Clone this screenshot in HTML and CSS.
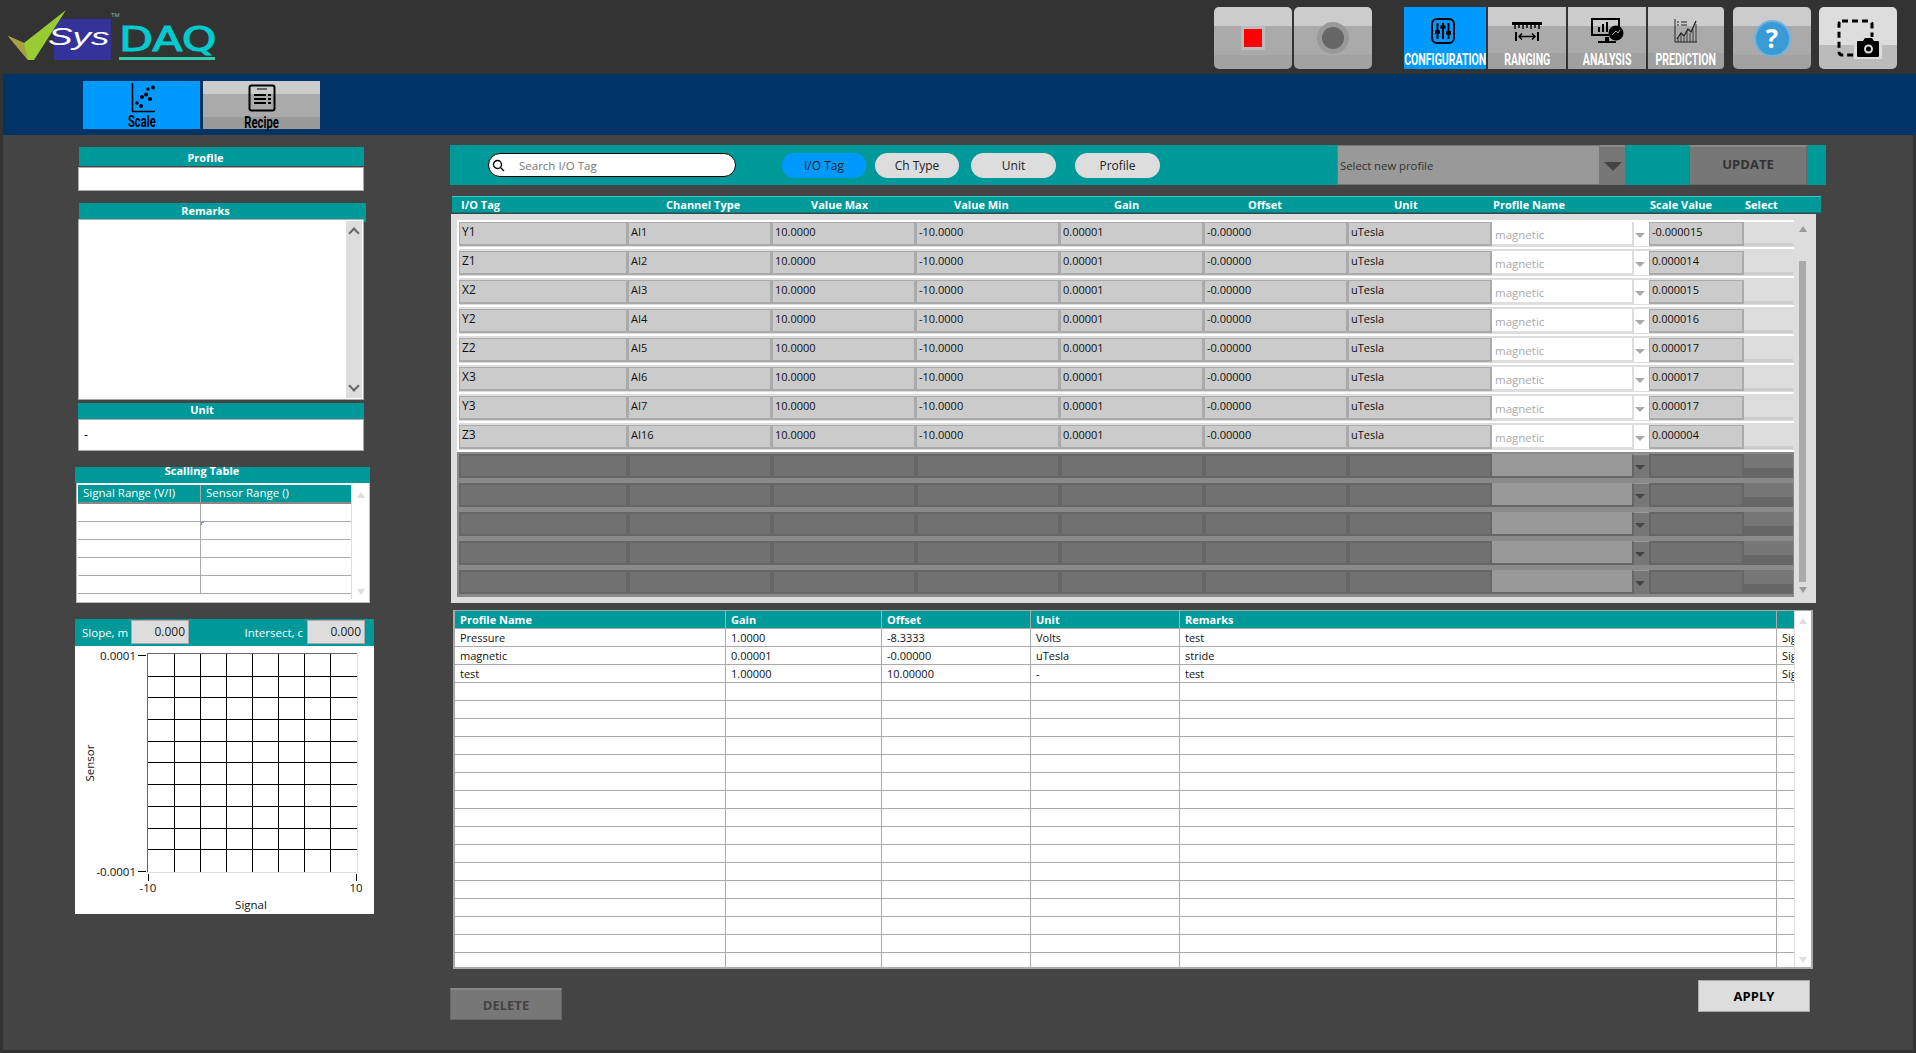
FILE: index.html
```html
<!DOCTYPE html>
<html lang="en">
<head>
<meta charset="utf-8">
<title>SysDAQ</title>
<link rel="stylesheet" href="styles.css">
</head>
<body>
<div class="page">
  <header class="topbar">
    <div class="logo">
      <svg class="logo-art" width="120" height="66" viewBox="0 0 120 66">
        <rect x="54" y="19" width="57" height="41" fill="#333399"/>
        <polygon points="8,36 24,43 66,10 34,60 28,60" fill="#99cc33"/>
        <polygon points="8,36 24,43 28,60" fill="#a8a040"/>
      </svg>
      <span class="logo-sys">Sys</span>
      <span class="logo-tm">TM</span>
      <div class="logo-daq"><span class="logo-daq-text">DAQ</span></div>
    </div>
    <div class="top-actions">
      <div class="tbtn tbtn-rec">
        <svg width="30" height="30" viewBox="0 0 30 30"><rect x="3" y="3" width="24" height="24" fill="#bbb"/><rect x="6" y="6" width="18" height="18" fill="#f00"/></svg>
      </div>
      <div class="tbtn tbtn-rec tbtn-next">
        <svg width="34" height="34" viewBox="0 0 34 34"><circle cx="17" cy="17" r="16" fill="#999"/><circle cx="17" cy="17" r="11" fill="#666"/></svg>
      </div>
      <div class="nav-group">
        <div class="nav nav-on">
          <svg class="nav-on-icon" width="26" height="26" viewBox="0 0 26 26" fill="none" stroke="#000" stroke-width="2"><rect x="2" y="1" width="22" height="24" rx="5"/><path d="M7.5 5v16M13 5v16M18.500 5v16"/><path d="M5 14h5M10.500 9h5M16 15h5" stroke-width="3.500"/></svg>
          <span class="nav-label">CONFIGURATION</span>
        </div>
        <div class="nav">
          <svg width="32" height="26" viewBox="0 0 32 26" fill="none" stroke="#000"><path d="M1 5.500h30" stroke-width="3"/><path d="M4 7v4M8 7v3M12 7v4M16 7v3M20 7v4M24 7v3M28 7v4" stroke-width="1.500"/><path d="M5 14v9M27 14v9" stroke-width="2"/><path d="M8 18.500h16" stroke-width="1.500"/><path d="M11 15.500l-3 3 3 3M21 15.500l3 3-3 3" stroke-width="1.500"/></svg>
          <span class="nav-label">RANGING</span>
        </div>
        <div class="nav">
          <svg width="34" height="26" viewBox="0 0 34 26"><path d="M2 1h27v16H2z" fill="none" stroke="#000" stroke-width="2"/><path d="M8 14V9h2v5zM12 14V6h2v8zM16 14V4h2v10z" fill="#000"/><path d="M8 23h18v2H8zM15 19h4v4h-4z" fill="#000"/><circle cx="26" cy="15" r="7.500" fill="#000"/><path d="M22 17l4-4 2 2 2-3" stroke="#aaa" fill="none"/></svg>
          <span class="nav-label">ANALYSIS</span>
        </div>
        <div class="nav">
          <svg width="26" height="26" viewBox="0 0 26 26" fill="none" stroke="#222"><path d="M2 1v23h22" stroke-width="1"/><path d="M4 4h2M8 4h6M4 7h2M8 7h6" stroke-width="1.200"/><path d="M4 21l4-6 3 3 4-7 3 3 5-11" stroke-width="1.300"/><path d="M5 20v4M8 16v8M11 19v5M14 13v11M17 15v9M20 11v13M23 6v18" stroke-width=".8"/></svg>
          <span class="nav-label">PREDICTION</span>
        </div>
      </div>
      <div class="tbtn tbtn-help"><span class="help-mark">?</span></div>
      <div class="tbtn tbtn-cam">
        <svg width="48" height="42" viewBox="0 0 48 42"><rect x="5" y="4" width="33" height="34" rx="3" fill="none" stroke="#000" stroke-width="3" stroke-dasharray="6 4"/><rect x="20" y="20" width="28" height="22" fill="#ddd"/><path d="M24 24h5l2-3h7l2 3h4a1 1 0 0 1 1 1v14a1 1 0 0 1-1 1H24a1 1 0 0 1-1-1V25a1 1 0 0 1 1-1z" fill="#000"/><circle cx="34.500" cy="32" r="4.500" fill="#ddd"/><circle cx="34.500" cy="32" r="2.500" fill="#000"/></svg>
      </div>
    </div>
  </header>

  <nav class="band">
    <div class="tab tab-on">
      <svg width="26" height="30" viewBox="0 0 26 30"><path d="M3.500 0v28.500H26" fill="none" stroke="#000" stroke-width="1.500"/><g fill="#000"><circle cx="8" cy="20" r="1.700"/><circle cx="13" cy="14" r="2"/><circle cx="12" cy="23" r="2"/><circle cx="17" cy="11.500" r="2"/><circle cx="21" cy="16" r="2"/><circle cx="19" cy="6" r="1.700"/><circle cx="24" cy="4.500" r="2"/></g></svg>
      <span class="tab-label">Scale</span>
    </div>
    <div class="tab">
      <svg width="28" height="28" viewBox="0 0 28 28"><rect x="1.500" y="1.500" width="25" height="25" rx="2" fill="none" stroke="#000" stroke-width="2"/><path d="M9 5h10" stroke="#000"/><path d="M6 11h12M6 15h12M6 19h12" stroke="#000" stroke-width="2"/><path d="M20 11h3M20 15h3M20 19h3" stroke="#000" stroke-width="2" stroke-dasharray="2 0"/></svg>
      <span class="tab-label tab-label-low">Recipe</span>
    </div>
  </nav>

  <main class="main">
    <section class="left">
      <div class="lhead lhead-profile">Profile</div>
      <div class="lfield lfield-profile"></div>

      <div class="lhead lhead-remarks">Remarks</div>
      <div class="remarks">
        <div class="rscroll"><span class="chev chev-up"></span><span class="chev chev-down"></span></div>
      </div>

      <div class="lhead lhead-unit">Unit</div>
      <div class="lfield lfield-unit">-</div>

      <div class="lhead lhead-scaling">Scalling Table</div>
      <div class="scaling">
        <div class="stable">
          <div class="srow srow-head"><div>Signal Range (V/I)</div><div>Sensor Range ()</div></div>
          <div class="srow"><div></div><div></div></div>
          <div class="srow"><div></div><div class="s-mark"></div></div>
          <div class="srow"><div></div><div></div></div>
          <div class="srow"><div></div><div></div></div>
          <div class="srow"><div></div><div></div></div>
        </div>
        <div class="sscroll"><span class="tri tri-up"></span><span class="tri tri-down"></span></div>
      </div>

      <div class="graph">
        <div class="graph-head">
          <span class="g-label g-slope">Slope, m</span><span class="g-value">0.000</span>
          <span class="g-label g-int">Intersect, c</span><span class="g-value">0.000</span>
        </div>
        <svg class="plot" width="299" height="268" viewBox="0 0 299 268">
          <rect x="0" y="0" width="299" height="268" fill="#fff"/>
          <g stroke="#000" stroke-width="1" shape-rendering="crispEdges">
            <path d="M99 7V226M125 7V226M151 7V226M177 7V226M203 7V226M229 7V226M255 7V226"/>
            <path d="M72 30H282M72 51H282M72 73H282M72 95H282M72 116H282M72 138H282M72 160H282M72 182H282M72 203H282"/>
            <path d="M63 9H71M63 225H71M73 228V235M281 228V235"/>
          </g>
          <path d="M72.500 226V7.500H282" fill="none" stroke="#666" stroke-width="1" shape-rendering="crispEdges"/>
          <path d="M72 226.500H282V7" fill="none" stroke="#ddd" stroke-width="1" shape-rendering="crispEdges"/>
          <g class="plot-text">
            <text x="61" y="14" text-anchor="end">0.0001</text>
            <text x="61" y="230" text-anchor="end">-0.0001</text>
            <text x="73" y="246" text-anchor="middle">-10</text>
            <text x="281" y="246" text-anchor="middle">10</text>
            <text x="176" y="263" text-anchor="middle">Signal</text>
            <text x="19" y="117" text-anchor="middle" transform="rotate(-90 19 117)">Sensor</text>
          </g>
        </svg>
      </div>
    </section>

    <section class="right">
      <div class="toolbar">
        <div class="search">
          <svg width="13" height="13" viewBox="0 0 13 13" fill="none" stroke="#000" stroke-width="1.300"><circle cx="5.500" cy="5.500" r="4"/><path d="M8.500 8.500l3.500 3.500"/></svg>
          <span>Search I/O Tag</span>
        </div>
        <div class="pill pill-on">I/O Tag</div>
        <div class="pill pill-ch">Ch Type</div>
        <div class="pill pill-unit">Unit</div>
        <div class="pill pill-profile">Profile</div>
        <div class="newprofile">Select new profile</div>
        <div class="newarrow"><span class="tri-dark"></span></div>
        <div class="update">UPDATE</div>
      </div>

      <div class="thead">
        <span class="th th1">I/O Tag</span><span class="th th2">Channel Type</span><span class="th th3">Value Max</span><span class="th th4">Value Min</span><span class="th th5">Gain</span><span class="th th6">Offset</span><span class="th th7">Unit</span><span class="th th8">Profile Name</span><span class="th th9">Scale Value</span><span class="th">Select</span>
      </div>

      <div class="panel">
        <div class="rows">
          <div class="row"><div class="c c1">Y1</div><div class="c">AI1</div><div class="c">10.0000</div><div class="c">-10.0000</div><div class="c">0.00001</div><div class="c">-0.00000</div><div class="c">uTesla</div><div class="combo">magnetic</div><div class="carrow"><span class="tri-light"></span></div><div class="c c9">-0.000015</div><div class="sel"></div></div>
          <div class="row"><div class="c c1">Z1</div><div class="c">AI2</div><div class="c">10.0000</div><div class="c">-10.0000</div><div class="c">0.00001</div><div class="c">-0.00000</div><div class="c">uTesla</div><div class="combo">magnetic</div><div class="carrow"><span class="tri-light"></span></div><div class="c c9">0.000014</div><div class="sel"></div></div>
          <div class="row"><div class="c c1">X2</div><div class="c">AI3</div><div class="c">10.0000</div><div class="c">-10.0000</div><div class="c">0.00001</div><div class="c">-0.00000</div><div class="c">uTesla</div><div class="combo">magnetic</div><div class="carrow"><span class="tri-light"></span></div><div class="c c9">0.000015</div><div class="sel"></div></div>
          <div class="row"><div class="c c1">Y2</div><div class="c">AI4</div><div class="c">10.0000</div><div class="c">-10.0000</div><div class="c">0.00001</div><div class="c">-0.00000</div><div class="c">uTesla</div><div class="combo">magnetic</div><div class="carrow"><span class="tri-light"></span></div><div class="c c9">0.000016</div><div class="sel"></div></div>
          <div class="row"><div class="c c1">Z2</div><div class="c">AI5</div><div class="c">10.0000</div><div class="c">-10.0000</div><div class="c">0.00001</div><div class="c">-0.00000</div><div class="c">uTesla</div><div class="combo">magnetic</div><div class="carrow"><span class="tri-light"></span></div><div class="c c9">0.000017</div><div class="sel"></div></div>
          <div class="row"><div class="c c1">X3</div><div class="c">AI6</div><div class="c">10.0000</div><div class="c">-10.0000</div><div class="c">0.00001</div><div class="c">-0.00000</div><div class="c">uTesla</div><div class="combo">magnetic</div><div class="carrow"><span class="tri-light"></span></div><div class="c c9">0.000017</div><div class="sel"></div></div>
          <div class="row"><div class="c c1">Y3</div><div class="c">AI7</div><div class="c">10.0000</div><div class="c">-10.0000</div><div class="c">0.00001</div><div class="c">-0.00000</div><div class="c">uTesla</div><div class="combo">magnetic</div><div class="carrow"><span class="tri-light"></span></div><div class="c c9">0.000017</div><div class="sel"></div></div>
          <div class="row"><div class="c c1">Z3</div><div class="c">AI16</div><div class="c">10.0000</div><div class="c">-10.0000</div><div class="c">0.00001</div><div class="c">-0.00000</div><div class="c">uTesla</div><div class="combo">magnetic</div><div class="carrow"><span class="tri-light"></span></div><div class="c c9">0.000004</div><div class="sel"></div></div>
          <div class="row off"><div class="c c1"></div><div class="c"></div><div class="c"></div><div class="c"></div><div class="c"></div><div class="c"></div><div class="c"></div><div class="combo"></div><div class="carrow"><span class="tri-dark-sm"></span></div><div class="c c9"></div><div class="sel"></div></div>
          <div class="row off"><div class="c c1"></div><div class="c"></div><div class="c"></div><div class="c"></div><div class="c"></div><div class="c"></div><div class="c"></div><div class="combo"></div><div class="carrow"><span class="tri-dark-sm"></span></div><div class="c c9"></div><div class="sel"></div></div>
          <div class="row off"><div class="c c1"></div><div class="c"></div><div class="c"></div><div class="c"></div><div class="c"></div><div class="c"></div><div class="c"></div><div class="combo"></div><div class="carrow"><span class="tri-dark-sm"></span></div><div class="c c9"></div><div class="sel"></div></div>
          <div class="row off"><div class="c c1"></div><div class="c"></div><div class="c"></div><div class="c"></div><div class="c"></div><div class="c"></div><div class="c"></div><div class="combo"></div><div class="carrow"><span class="tri-dark-sm"></span></div><div class="c c9"></div><div class="sel"></div></div>
          <div class="row off"><div class="c c1"></div><div class="c"></div><div class="c"></div><div class="c"></div><div class="c"></div><div class="c"></div><div class="c"></div><div class="combo"></div><div class="carrow"><span class="tri-dark-sm"></span></div><div class="c c9"></div><div class="sel"></div></div>
        </div>
        <div class="pscroll">
          <span class="tri tri-up tri-mid"></span>
          <span class="thumb"></span>
          <span class="tri tri-down tri-mid"></span>
        </div>
      </div>

      <div class="ptable">
        <div class="pgrid">
          <div class="prow phead"><div>Profile Name</div><div>Gain</div><div>Offset</div><div>Unit</div><div>Remarks</div><div></div></div>
          <div class="prow"><div>Pressure</div><div>1.0000</div><div>-8.3333</div><div>Volts</div><div>test</div><div>Sig</div></div>
          <div class="prow"><div>magnetic</div><div>0.00001</div><div>-0.00000</div><div>uTesla</div><div>stride</div><div>Sig</div></div>
          <div class="prow"><div>test</div><div>1.00000</div><div>10.00000</div><div>-</div><div>test</div><div>Sig</div></div>
          <div class="prow"><div></div><div></div><div></div><div></div><div></div><div></div></div>
          <div class="prow"><div></div><div></div><div></div><div></div><div></div><div></div></div>
          <div class="prow"><div></div><div></div><div></div><div></div><div></div><div></div></div>
          <div class="prow"><div></div><div></div><div></div><div></div><div></div><div></div></div>
          <div class="prow"><div></div><div></div><div></div><div></div><div></div><div></div></div>
          <div class="prow"><div></div><div></div><div></div><div></div><div></div><div></div></div>
          <div class="prow"><div></div><div></div><div></div><div></div><div></div><div></div></div>
          <div class="prow"><div></div><div></div><div></div><div></div><div></div><div></div></div>
          <div class="prow"><div></div><div></div><div></div><div></div><div></div><div></div></div>
          <div class="prow"><div></div><div></div><div></div><div></div><div></div><div></div></div>
          <div class="prow"><div></div><div></div><div></div><div></div><div></div><div></div></div>
          <div class="prow"><div></div><div></div><div></div><div></div><div></div><div></div></div>
          <div class="prow"><div></div><div></div><div></div><div></div><div></div><div></div></div>
          <div class="prow"><div></div><div></div><div></div><div></div><div></div><div></div></div>
          <div class="prow"><div></div><div></div><div></div><div></div><div></div><div></div></div>
          <div class="prow prow-last"><div></div><div></div><div></div><div></div><div></div><div></div></div>
        </div>
        <div class="ptscroll"><span class="tri tri-up"></span><span class="tri tri-down"></span></div>
      </div>

      <div class="footer">
        <div class="btn-delete">DELETE</div>
        <div class="btn-apply">APPLY</div>
      </div>
    </section>
  </main>
</div>
</body>
</html>
```

FILE: styles.css
```css
* { box-sizing: border-box; }
html, body { margin: 0; padding: 0; }
body { width: 1916px; height: 1053px; overflow: hidden; background: #333; font-family: "Open Sans", "Noto Sans", "Liberation Sans", sans-serif; font-size: 11px; color: #000; }
.page { width: 1916px; height: 1053px; display: flex; flex-direction: column; }

/* Top bar */
.topbar { height: 74px; display: flex; justify-content: space-between; background: #333; flex: none; }
.logo { position: relative; width: 240px; height: 74px; }
.logo-art { position: absolute; left: 0; top: 0; }
.logo-sys { position: absolute; left: 48px; top: 24px; font: italic 400 23px/26px "Liberation Sans", sans-serif; color: #fff; transform: scaleX(1.6); transform-origin: left; }
.logo-tm { position: absolute; left: 111px; top: 11px; font-size: 6px; line-height: 8px; color: #aaa; }
.logo-daq { position: absolute; left: 119px; top: 22px; width: 96px; height: 38px; border-bottom: 3px solid #33ccaa; }
.logo-daq-text { display: block; font: 400 34px/34px "DejaVu Sans", sans-serif; color: #00ccd0; -webkit-text-stroke: 1px #00ccd0; transform: scaleX(1.3); transform-origin: left; white-space: nowrap; }
.top-actions { display: flex; padding: 7px 19px 0 0; align-items: flex-start; }
.tbtn { height: 62px; width: 78px; border-radius: 5px; display: flex; align-items: center; justify-content: center; background: linear-gradient(#cccccc 0 30%, #aaaaaa 30% 78%, #a2a2a2 78%); }
.tbtn-rec svg { display: block; }
.tbtn-next { margin-left: 2px; margin-right: 32px; }
.tbtn-help { margin-left: 9px; }
.tbtn-cam { margin-left: 8px; background: linear-gradient(#dddddd 0 62%, #bbbbbb 62%); }
.help-mark { width: 37px; height: 37px; border-radius: 50%; background: #3a9ad6; border: 2px solid #6db4e0; color: #fff; font: 700 26px/33px "Open Sans", sans-serif; text-align: center; }
.nav-group { display: flex; gap: 2px; }
.nav { width: 78px; height: 62px; display: flex; flex-direction: column; align-items: center; padding-top: 11px; background: linear-gradient(#cccccc 0 30%, #aaaaaa 30% 75%, #a0a0a0 75%); overflow: hidden; }
.nav-on { width: 82px; background: #0099ff; }
.nav-group .nav:last-child { width: 76px; border-radius: 0 4px 4px 0; }
.nav svg { height: 26px; flex: none; }
.nav-on-icon { margin-right: 5px; }
.nav-label { display: block; margin-top: 7px; font: 700 17px/17px Roboto, sans-serif; color: #fff; white-space: nowrap; transform: scaleX(.62); flex: none; }

/* Blue band */
.band { height: 61px; margin-left: 3px; background: #003366; display: flex; gap: 3px; padding: 7px 0 0 80px; flex: none; }
.tab { width: 117px; height: 48px; display: flex; flex-direction: column; align-items: center; background: linear-gradient(#cccccc 0 27%, #aaaaaa 27% 75%, #999999 75%); padding-top: 2px; }
.tab-on { background: #0099ff; }
.tab svg { display: block; flex: none; height: 30px; }
.tab-label { display: block; margin-top: 1px; font: 700 16px/15px Roboto, sans-serif; color: #000; transform: scaleX(.7); flex: none; }
.tab-label-low { margin-top: 2px; }

/* Main */
.main { flex: 1; margin: 0 3px 3px; background: #444; display: flex; min-height: 0; }
.left { width: 300px; margin-left: 72px; flex: none; }
.right { width: 1376px; margin-left: 75px; flex: none; }

/* Left column */
.lhead { background: #009999; color: #fff; font-weight: 700; font-size: 11px; text-align: center; }
.lhead-profile { margin: 12px 0 0 4px; width: 285px; height: 19px; line-height: 21px; padding-right: 32px; }
.lfield { background: #fff; border: 1px solid #aaa; width: 286px; margin-left: 3px; font-size: 12px; padding-left: 5px; }
.lfield-profile { height: 24px; margin-top: 1px; }
.lhead-remarks { margin: 12px 0 0 4px; width: 287px; height: 19px; line-height: 15px; padding-right: 34px; }
.remarks { margin: -3px 0 0 3px; width: 286px; height: 181px; background: #fff; border: 1px solid #aaa; padding: 1px 1px 1px 267px; position: relative; }
.rscroll { width: 16px; height: 177px; background: #ddd; position: relative; }
.chev { position: absolute; left: 4px; width: 8px; height: 8px; border-left: 2px solid #666; border-top: 2px solid #666; transform: rotate(45deg); }
.chev-up { top: 8px; }
.chev-down { bottom: 8px; transform: rotate(225deg); }
.lhead-unit { margin: 3px 0 0 3px; width: 286px; height: 16px; line-height: 14px; padding-right: 38px; }
.lfield-unit { height: 32px; line-height: 30px; }
.lhead-scaling { margin: 16px 0 0 0; width: 295px; height: 16px; line-height: 8px; padding-right: 41px; }
.scaling { margin-left: 1px; width: 294px; height: 120px; background: #fff; border: 1px solid #bbb; border-top: 0; display: flex; padding: 2px 0 0 1px; }
.stable { width: 273px; flex: none; overflow: hidden; height: 116px; }
.srow { display: flex; height: 18px; border-bottom: 1px solid #aaa; }
.srow > div { width: 123px; flex: none; border-right: 1px solid #aaa; padding-left: 5px; font-size: 11.5px; line-height: 16px; color: #fff; }
.srow > div + div { width: 150px; border-right: 0; }
.srow-head { height: 19px; background: #009999; border-bottom: 2px solid #888; }
.s-mark { background: linear-gradient(#5599ee, #5599ee) 0 0 / 3px 1px no-repeat, linear-gradient(#5599ee, #5599ee) 0 0 / 1px 3px no-repeat; }
.sscroll { width: 19px; border-left: 1px solid #ddd; position: relative; margin-bottom: 3px; }
.tri { position: absolute; left: 50%; margin-left: -4px; width: 0; height: 0; border-left: 4px solid transparent; border-right: 4px solid transparent; }
.tri-up { top: 7px; border-bottom: 6px solid #ddd; }
.tri-down { bottom: 4px; border-top: 6px solid #ddd; }
.graph { margin-top: 16px; width: 299px; height: 295px; background: #fff; }
.graph-head { height: 27px; background: #009999; display: flex; align-items: flex-start; padding-top: 1px; color: #fff; font-size: 11.5px; }
.g-label { line-height: 26px; }
.g-slope { margin-left: 7px; width: 49px; white-space: nowrap; }
.g-int { margin-left: 54px; width: 60px; text-align: right; white-space: nowrap; margin-right: 4px; }
.g-value { width: 58px; height: 24px; background: #ddd; border: 1px solid #aaa; text-align: right; padding-right: 3px; line-height: 21px; color: #222; font-size: 12px; }
.plot { display: block; }
.plot-text text { font: 400 11.5px "Open Sans", sans-serif; fill: #111; }

/* Toolbar */
.toolbar { margin-top: 10px; height: 40px; background: #009999; display: flex; align-items: center; }
.search { margin-left: 38px; width: 248px; height: 24px; background: #fff; border: 1px solid #000; border-radius: 12px; display: flex; align-items: center; padding-left: 3px; color: #777; font-size: 11.5px; }
.search span { margin-left: 14px; }
.pill { width: 84px; height: 25px; border-radius: 13px; background: #ddd; text-align: center; line-height: 26px; font-size: 12px; color: #222; }
.pill-on { margin-left: 46px; background: #0099ff; color: #222; }
.pill-ch { margin-left: 9px; }
.pill-unit { margin-left: 12px; width: 85px; }
.pill-profile { margin-left: 19px; width: 85px; }
.newprofile { margin-left: 177px; width: 263px; height: 40px; background: #999; border: 1px solid #777; color: #333; font-size: 11.3px; line-height: 40px; padding-left: 2px; }
.newarrow { width: 25px; height: 40px; background: #777; display: flex; align-items: center; justify-content: center; border-top: 2px solid #888; }
.tri-dark { width: 0; height: 0; border-left: 9px solid transparent; border-right: 9px solid transparent; border-top: 9px solid #444; }
.update { margin-left: 64px; width: 118px; height: 40px; background: #777; border: 1px solid #666; border-top: 2px solid #888; color: #333; font-weight: 700; font-size: 13px; line-height: 34px; text-align: center; }

/* Upper table */
.thead { margin: 11px 0 0 2px; width: 1369px; height: 17px; background: #009999; border-top: 1px solid #33cccc; border-bottom: 1px solid #007777; display: flex; color: #fff; font-weight: 700; font-size: 11px; line-height: 16px; padding-left: 9px; }
.th { flex: none; white-space: nowrap; }
.th1 { width: 205px; } .th2 { width: 145px; } .th3 { width: 143px; } .th4 { width: 160px; } .th5 { width: 134px; } .th6 { width: 146px; } .th7 { width: 99px; } .th8 { width: 157px; } .th9 { width: 95px; }
.panel { margin: 1px 0 0 1px; width: 1365px; height: 389px; background: #ddd; padding: 6px 6px 0 6px; display: flex; }
.rows { width: 1337px; flex: none; }
.row { height: 29px; padding: 2px 0 1px 0; border-bottom: 2px solid #fff; border-left: 2px solid #fff; background: #ddd; display: flex; }
.row:first-child { box-shadow: inset 0 2px #fff; }
.c { width: 144px; height: 24px; flex: none; background: #cbcbcb; border: 1px solid #aaa; border-width: 1px 2px 2px 1px; padding-left: 2px; line-height: 18px; font-size: 11px; color: #111; }
.c1 { width: 169px; padding-left: 2px; font-size: 12px; }
.c9 { width: 95px; }
.combo { width: 140px; height: 24px; flex: none; background: #fff; border-bottom: 2px solid #ddd; color: #aaa; font-size: 11.5px; line-height: 25px; padding-left: 3px; }
.carrow { width: 17px; height: 24px; flex: none; background: #fff; border-left: 2px solid #ddd; display: flex; align-items: center; justify-content: center; padding: 2px 3px 0 0; }
.tri-light { width: 0; height: 0; border-left: 5px solid transparent; border-right: 5px solid transparent; border-top: 5px solid #aaa; }
.sel { width: 49px; height: 24px; flex: none; background: linear-gradient(#dddddd 0 88%, #cccccc 88%); }
.off { background: #8a8a8a; border-bottom-color: #8a8a8a; border-left-color: #8a8a8a; }
.off .c { background: #717171; border-color: #666; border-width: 2px; }
.off .combo { background: #999; border-bottom-color: #666; }
.off .carrow { background: #777; border-left-color: #666; border-top: 1px solid #999; }
.off .sel { background: linear-gradient(#777777 0 58%, #666666 58%); }
.tri-dark-sm { width: 0; height: 0; border-left: 5px solid transparent; border-right: 5px solid transparent; border-top: 5px solid #444; }
.pscroll { width: 16px; margin-left: 1px; height: 377px; position: relative; }
.tri-mid { margin-left: -4px; }
.tri-mid.tri-up { border-bottom-color: #999; top: 6px; }
.tri-mid.tri-down { border-top-color: #999; bottom: 4px; }
.thumb { position: absolute; left: 4px; top: 41px; width: 7px; height: 321px; background: #aaa; }

/* Lower table */
.ptable { margin: 7px 0 0 3px; width: 1360px; height: 359px; background: #fff; border: 2px solid #aaa; border-top-width: 1px; display: flex; }
.pgrid { width: 1339px; flex: none; overflow: hidden; }
.prow { height: 18px; display: flex; border-bottom: 1px solid #aaa; }
.prow > div { flex: none; border-right: 1px solid #aaa; padding-left: 5px; line-height: 18px; font-size: 11px; overflow: hidden; white-space: nowrap; color: #111; }
.prow > div:nth-child(1) { width: 271px; padding-left: 5px; }
.prow > div:nth-child(2) { width: 156px; }
.prow > div:nth-child(3) { width: 149px; }
.prow > div:nth-child(4) { width: 149px; }
.prow > div:nth-child(5) { width: 597px; }
.prow > div:nth-child(6) { width: 17px; border-right: 0; }
.phead { background: #009999; border-bottom-color: #aaa; }
.phead > div { color: #fff; font-weight: 700; }
.prow-last { border-bottom: 0; }
.ptscroll { width: 17px; border-left: 1px solid #ddd; position: relative; }

/* Footer */
.footer { margin-top: 11px; width: 1360px; display: flex; align-items: flex-start; justify-content: space-between; }
.btn-delete { margin-top: 8px; width: 112px; height: 32px; background: #777; border: 1px solid #666; border-top: 2px solid #888; color: #444; font-weight: 700; font-size: 13px; line-height: 31px; text-align: center; }
.btn-apply { width: 112px; height: 32px; background: #ddd; border: 1px solid #aaa; color: #000; font-weight: 700; font-size: 13px; line-height: 30px; text-align: center; }
```
